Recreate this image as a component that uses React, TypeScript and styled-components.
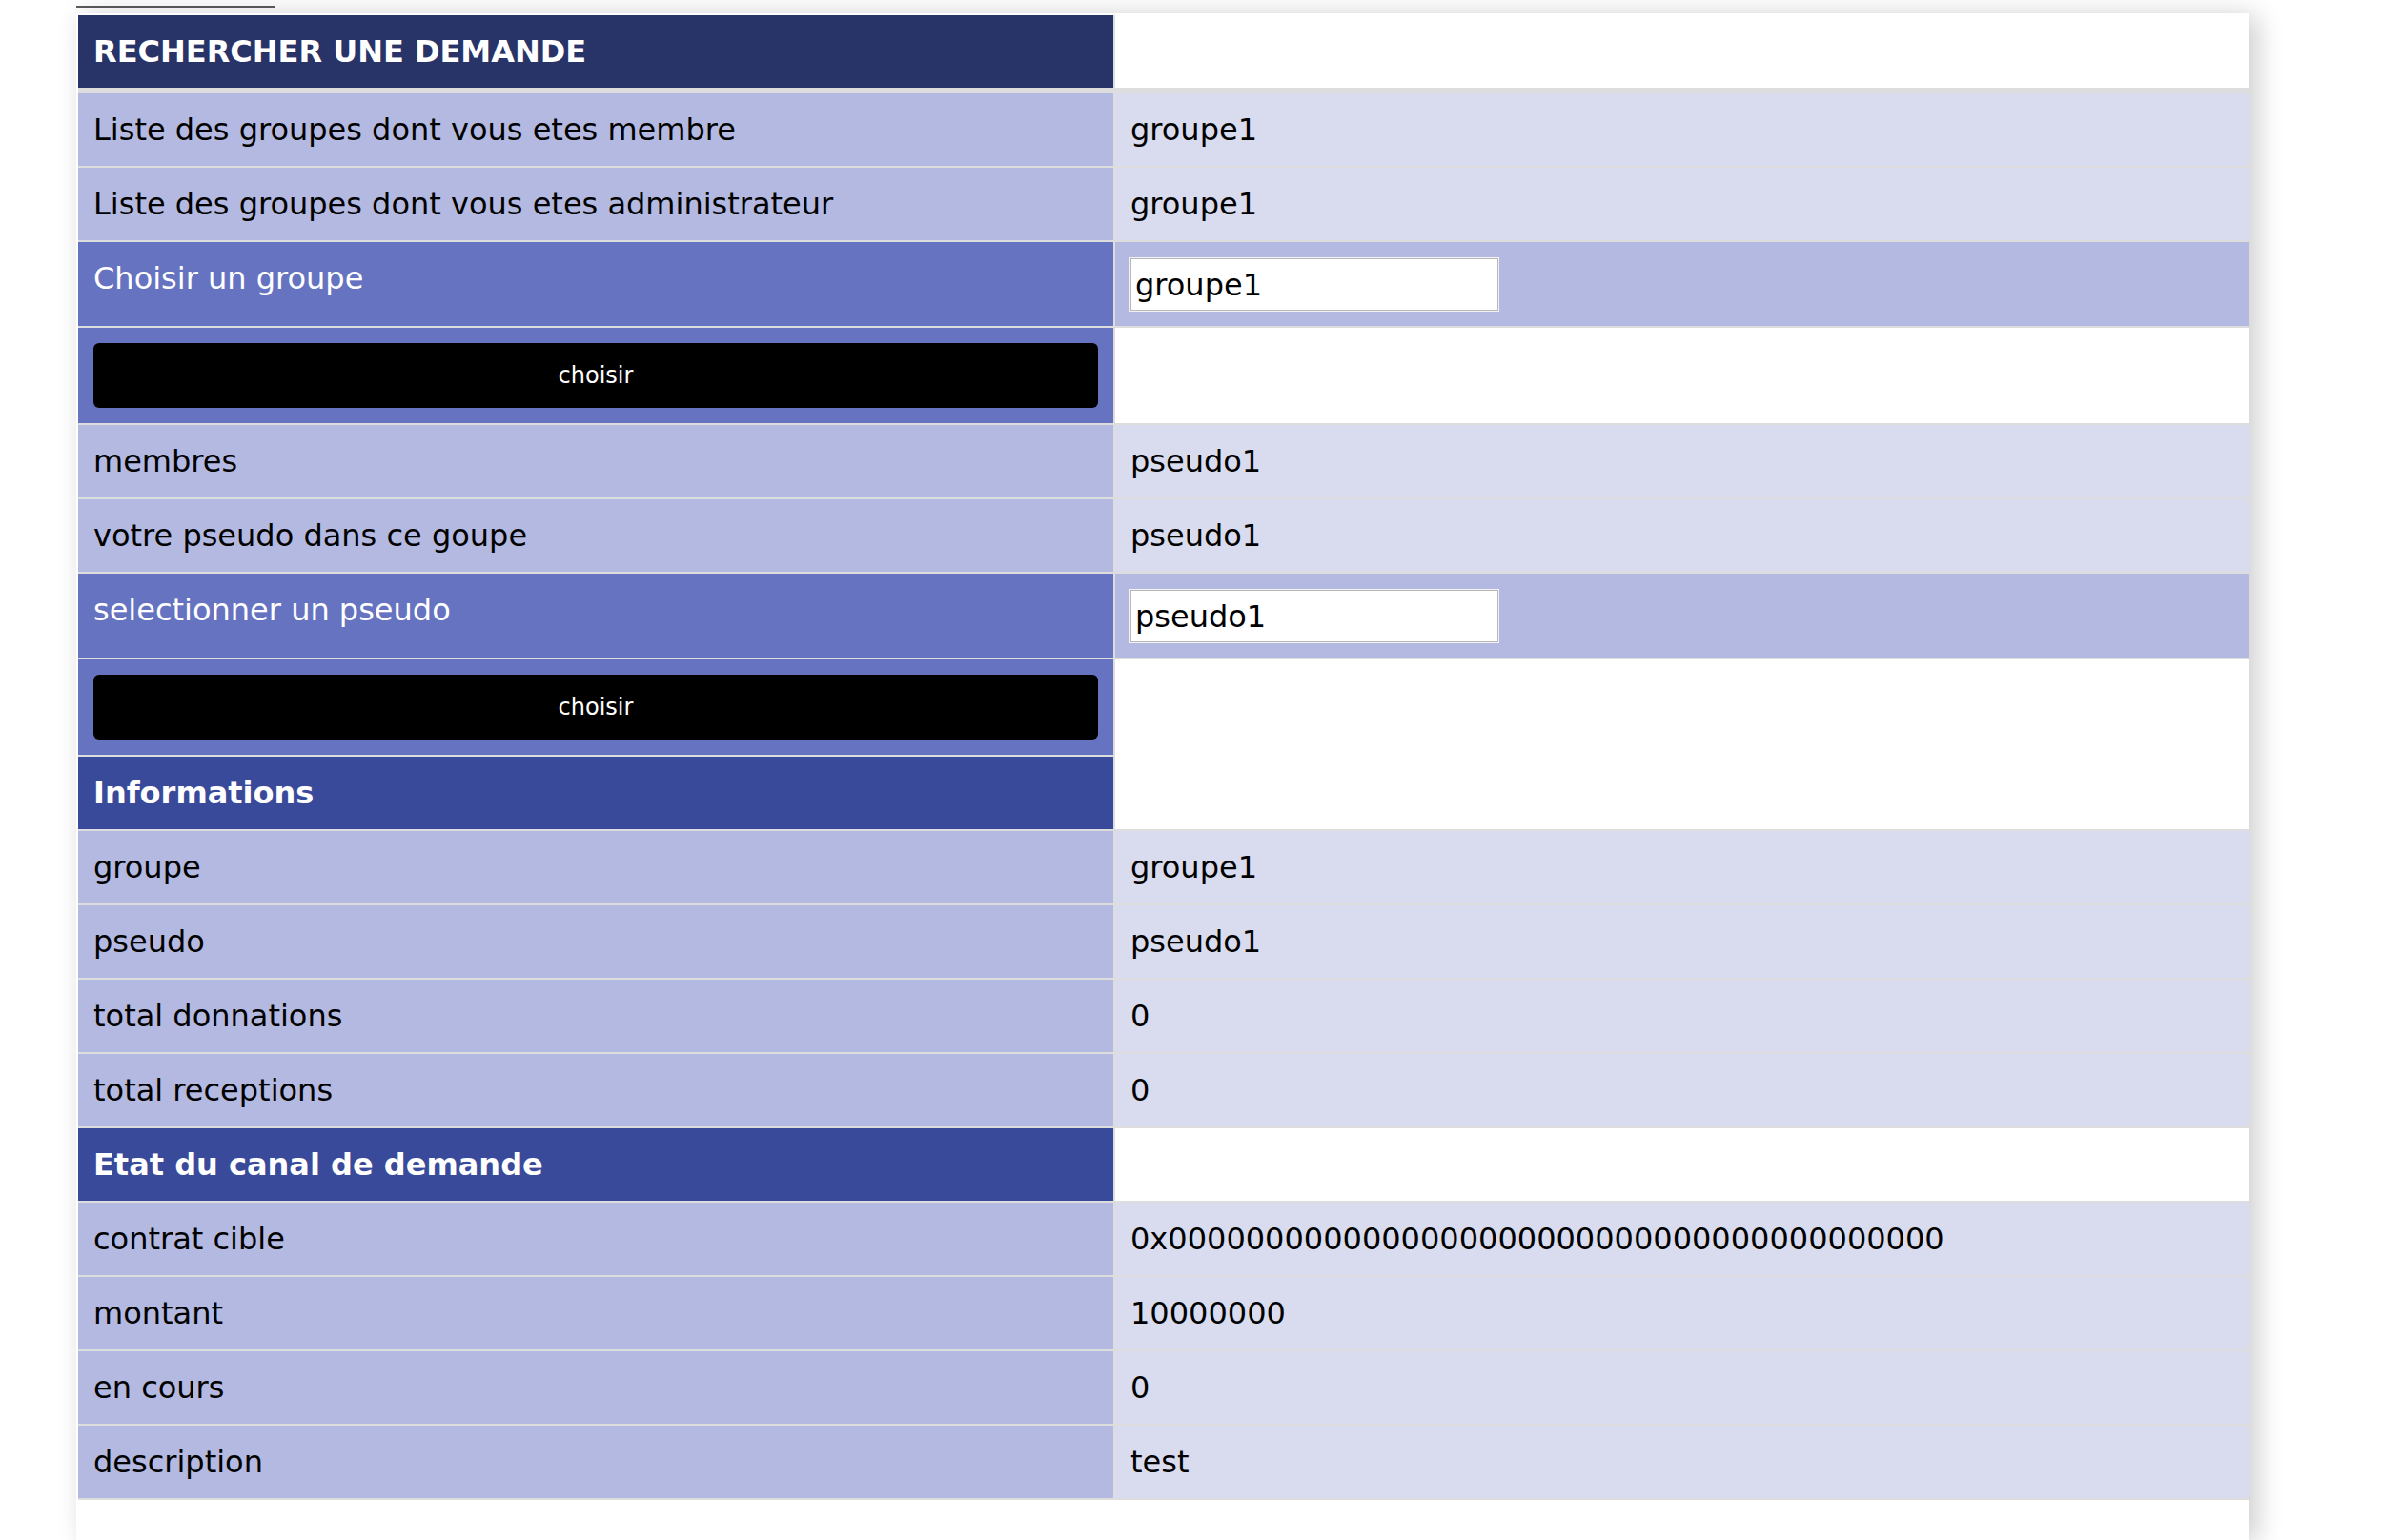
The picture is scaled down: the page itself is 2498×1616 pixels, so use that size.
import React from "react";
import styled, { createGlobalStyle, css } from "styled-components";

const GlobalStyle = createGlobalStyle`
  html, body {
    margin: 0;
    padding: 0;
    background: #ffffff;
  }
  body {
    font-family: "DejaVu Sans", Verdana, sans-serif;
    font-size: 32px;
    color: #000;
  }
`;

const Page = styled.div`
  display: flex;
  flex-direction: column;
  padding: 6px 0 0 80px;
  min-height: 1616px;
  box-sizing: border-box;
`;

const TabLine = styled.div`
  width: 209px;
  height: 2px;
  background: #5c5c5c;
`;

const Card = styled.div`
  margin-top: 6px;
  width: 2280px;
  flex: 1;
  background: #ffffff;
  box-shadow: 8px 2px 26px rgba(0, 0, 0, 0.2);
  padding: 2px 0 0 2px;
  box-sizing: border-box;
`;

const Table = styled.div`
  display: flex;
  flex-direction: column;
  gap: 2px;
  background: #dddddd;
  padding-bottom: 2px;
`;

const Row = styled.div<{ $title?: boolean }>`
  display: grid;
  grid-template-columns: 1086px 1fr;
  column-gap: 2px;
  ${(p) =>
    p.$title &&
    css`
      margin-bottom: 4px;
    `}
`;

type LabelKind = "title" | "section" | "label" | "action";

const labelBg: Record<LabelKind, string> = {
  title: "#283368",
  section: "#3a4a9b",
  label: "#b3b9e0",
  action: "#6673c1",
};

const LabelCell = styled.div<{ $kind: LabelKind }>`
  background: ${(p) => labelBg[p.$kind]};
  color: ${(p) => (p.$kind === "label" ? "#000" : "#fff")};
  font-weight: ${(p) => (p.$kind === "title" || p.$kind === "section" ? 700 : 400)};
  padding: 20px 16px;
  line-height: 36px;
  white-space: nowrap;
`;

const ButtonCell = styled.div`
  background: #6673c1;
  padding: 16px;
`;

type ValueKind = "value" | "input" | "blank";

const valueBg: Record<ValueKind, string> = {
  value: "#d8dcee",
  input: "#b3b9e0",
  blank: "#ffffff",
};

const ValueCell = styled.div<{ $kind: ValueKind; $joinBelow?: boolean }>`
  background: ${(p) => valueBg[p.$kind]};
  padding: ${(p) => (p.$kind === "input" ? "17px 16px 16px" : "20px 16px")};
  line-height: 36px;
  white-space: nowrap;
  ${(p) =>
    p.$joinBelow &&
    css`
      box-shadow: 0 2px 0 ${valueBg[p.$kind]};
    `}
`;

const TextInput = styled.input`
  display: block;
  width: 386px;
  height: 55px;
  box-sizing: border-box;
  margin: 0;
  padding: 0 4px;
  border: 1px solid #b9b9b9;
  box-shadow: 0 0 0 1px #f2f2f2;
  background: #fff;
  font-family: "DejaVu Sans", Verdana, sans-serif;
  font-size: 32px;
  color: #000;
  outline: none;
`;

const ActionButton = styled.button`
  display: block;
  width: 100%;
  height: 68px;
  border: none;
  border-radius: 6px;
  background: #000;
  color: #fff;
  font-family: "DejaVu Sans", Verdana, sans-serif;
  font-size: 24px;
  cursor: pointer;
`;

type RowDef =
  | { type: "title"; label: string }
  | { type: "section"; label: string }
  | { type: "value"; label: string; value: string }
  | { type: "input"; label: string; value: string }
  | { type: "button"; label: string; joinBelow?: boolean };

const rows: RowDef[] = [
  { type: "title", label: "RECHERCHER UNE DEMANDE" },
  { type: "value", label: "Liste des groupes dont vous etes membre", value: "groupe1" },
  { type: "value", label: "Liste des groupes dont vous etes administrateur", value: "groupe1" },
  { type: "input", label: "Choisir un groupe", value: "groupe1" },
  { type: "button", label: "choisir" },
  { type: "value", label: "membres", value: "pseudo1" },
  { type: "value", label: "votre pseudo dans ce goupe", value: "pseudo1" },
  { type: "input", label: "selectionner un pseudo", value: "pseudo1" },
  { type: "button", label: "choisir", joinBelow: true },
  { type: "section", label: "Informations" },
  { type: "value", label: "groupe", value: "groupe1" },
  { type: "value", label: "pseudo", value: "pseudo1" },
  { type: "value", label: "total donnations", value: "0" },
  { type: "value", label: "total receptions", value: "0" },
  { type: "section", label: "Etat du canal de demande" },
  { type: "value", label: "contrat cible", value: "0x0000000000000000000000000000000000000000" },
  { type: "value", label: "montant", value: "10000000" },
  { type: "value", label: "en cours", value: "0" },
  { type: "value", label: "description", value: "test" },
];

function renderRow(r: RowDef, i: number) {
  switch (r.type) {
    case "title":
      return (
        <Row key={i} $title>
          <LabelCell $kind="title">{r.label}</LabelCell>
          <ValueCell $kind="blank" />
        </Row>
      );
    case "section":
      return (
        <Row key={i}>
          <LabelCell $kind="section">{r.label}</LabelCell>
          <ValueCell $kind="blank" />
        </Row>
      );
    case "value":
      return (
        <Row key={i}>
          <LabelCell $kind="label">{r.label}</LabelCell>
          <ValueCell $kind="value">{r.value}</ValueCell>
        </Row>
      );
    case "input":
      return (
        <Row key={i}>
          <LabelCell $kind="action">{r.label}</LabelCell>
          <ValueCell $kind="input">
            <TextInput defaultValue={r.value} />
          </ValueCell>
        </Row>
      );
    case "button":
      return (
        <Row key={i}>
          <ButtonCell>
            <ActionButton type="button">{r.label}</ActionButton>
          </ButtonCell>
          <ValueCell $kind="blank" $joinBelow={r.joinBelow} />
        </Row>
      );
  }
}

export default function App() {
  return (
    <>
      <GlobalStyle />
      <Page>
        <TabLine />
        <Card>
          <Table>{rows.map(renderRow)}</Table>
        </Card>
      </Page>
    </>
  );
}
